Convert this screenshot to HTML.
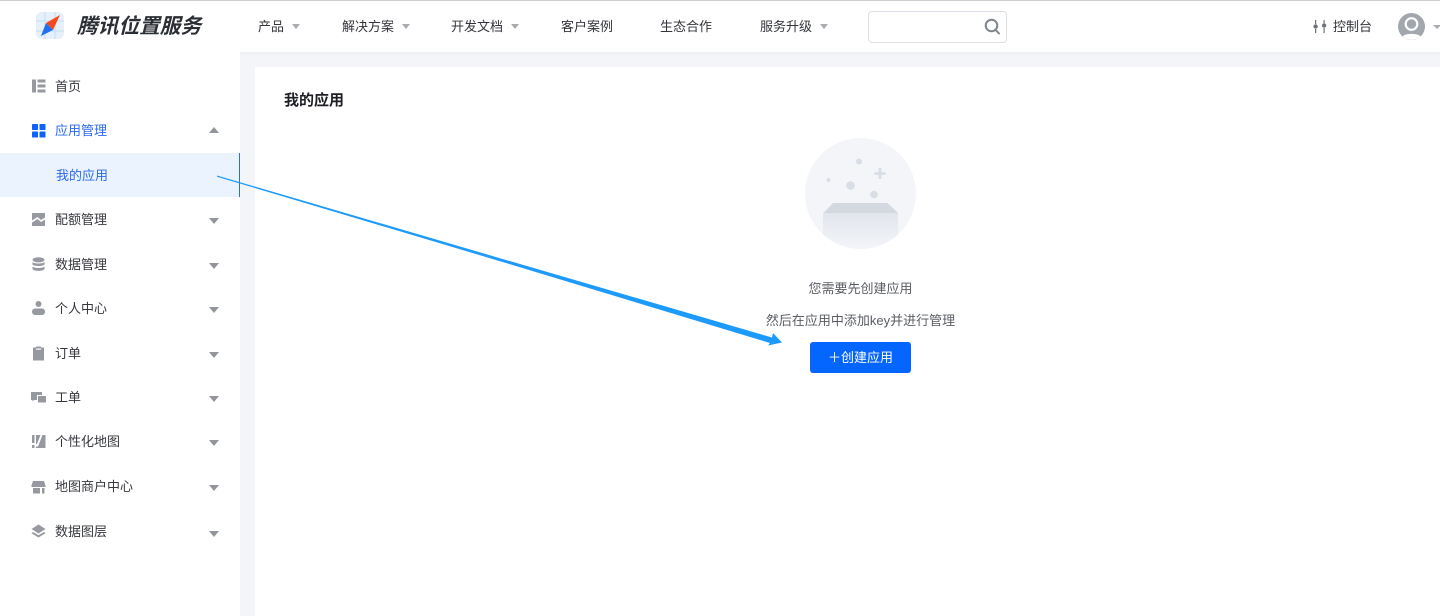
<!DOCTYPE html>
<html lang="zh"><head><meta charset="utf-8"><title>我的应用</title>
<style>
html,body{margin:0;padding:0;width:1440px;height:616px;overflow:hidden;background:#f3f5f9;font-family:"Liberation Sans","Noto Sans CJK SC",sans-serif;font-size:13px;color:#444}
.a{position:absolute;white-space:nowrap}
.nav{top:18px;line-height:18px;color:#33353b}
.tri{position:absolute;width:0;height:0;border-left:4px solid transparent;border-right:4px solid transparent;border-top:5px solid #a9abb0}
.m{left:55px;line-height:18px;color:#36383e}
.st{position:absolute;left:209px;width:0;height:0;border-left:5px solid transparent;border-right:5px solid transparent;border-top:6px solid #92959b}
.ic{position:absolute;left:30px;width:17px;height:17px}
</style></head><body>
<div class="a" style="left:0;top:0;width:1440px;height:52px;background:#fff;border-top:1px solid #ccc;box-sizing:border-box;box-shadow:0 1px 4px rgba(30,40,70,.06)"></div>
<div class="a" style="left:0;top:52px;width:240px;height:564px;background:#fff"></div>
<div class="a" style="left:255px;top:67px;width:1185px;height:549px;background:#fff"></div>

<svg class="a" style="left:36px;top:11px" width="29" height="29" viewBox="0 0 29 29">
<rect x="0" y="1" width="28" height="27" rx="6" fill="#e6f0fb"/>
<path d="M9 1V28M19 1V28M0 10H28M0 20H28" stroke="#cfe3f6" stroke-width="1.5"/>
<path d="M24 4L17 19 10 12Z" fill="#f4481e"/>
<path d="M5 25L10 12 17 19Z" fill="#1f6ff0"/>
</svg>
<div class="a" style="left:77px;top:14px;font-size:20.7px;line-height:26px;font-weight:bold;font-style:italic;color:#2b2e34">腾讯位置服务</div>

<div class="a nav" style="left:258px">产品</div><div class="tri" style="left:292px;top:24px"></div>
<div class="a nav" style="left:342px">解决方案</div><div class="tri" style="left:402px;top:24px"></div>
<div class="a nav" style="left:451px">开发文档</div><div class="tri" style="left:511px;top:24px"></div>
<div class="a nav" style="left:561px">客户案例</div>
<div class="a nav" style="left:660px">生态合作</div>
<div class="a nav" style="left:760px">服务升级</div><div class="tri" style="left:820px;top:24px"></div>
<div class="a" style="left:868px;top:11px;width:139px;height:32px;box-sizing:border-box;border:1px solid #dcdfe6;border-radius:4px;background:#fff"></div>
<svg class="a" style="left:983px;top:17px" width="18" height="18" viewBox="0 0 18 18" fill="none" stroke="#7f858e" stroke-width="2"><circle cx="8.500" cy="8.500" r="5.800"/><path d="M12.800 13L16 16.500" stroke-linecap="round"/></svg>

<svg class="a" style="left:1313px;top:18px" width="15" height="17" viewBox="0 0 15 17" fill="#6e727a"><rect x="2" y="2" width="1.200" height="4"/><rect x="2" y="11" width="1.200" height="4"/><rect x="10.500" y="2" width="1.200" height="3"/><rect x="10.500" y="10" width="1.200" height="5"/><circle cx="2.600" cy="8.500" r="2.200"/><circle cx="11.100" cy="7.500" r="2.200"/></svg>
<div class="a nav" style="left:1333px">控制台</div>
<svg class="a" style="left:1398px;top:13px" width="28" height="28" viewBox="0 0 28 28"><circle cx="13.500" cy="13.500" r="13.500" fill="#a2a6ad"/><circle cx="13.500" cy="11" r="5.800" fill="none" stroke="#fff" stroke-width="2.200"/><path d="M4.500 23.500C7 20 20 20 22.500 23.500A13.500 13.500 0 0 1 4.500 23.500Z" fill="#fff"/></svg>
<div class="tri" style="left:1433px;top:25px;border-left-width:4px;border-right-width:4px;border-top-width:4px"></div>

<div class="a" style="left:0;top:153px;width:240px;height:44px;background:#ebf3fe;box-sizing:border-box;border-right:1px solid #2a6fdc"></div>

<svg class="ic" style="top:78px" viewBox="0 0 17 17" fill="#96999f"><rect x="2" y="1.500" width="4" height="13"/><rect x="7.500" y="1.500" width="8" height="3"/><rect x="7.500" y="6.500" width="8" height="3"/><rect x="7.500" y="11.500" width="8" height="3"/></svg>
<div class="a m" style="top:78px">首页</div>

<svg class="ic" style="top:122px" viewBox="0 0 17 17" fill="#0f62fe"><rect x="2" y="2" width="6" height="6" rx=".8"/><rect x="9.500" y="2" width="6" height="6" rx=".8"/><rect x="2" y="9.500" width="6" height="6" rx=".8"/><rect x="9.500" y="9.500" width="6" height="6" rx=".8"/></svg>
<div class="a m" style="top:122px;color:#2a6af0">应用管理</div>
<div class="st" style="top:127px;border-top:0;border-bottom:6px solid #92959b"></div>

<div class="a m" style="left:56px;top:167px;color:#2a6af0">我的应用</div>

<svg class="ic" style="top:211px" viewBox="0 0 17 17" fill="#96999f"><path d="M2 2H15V6.500L11 9 7.500 6 2 9.500ZM2 11.500L7.500 8 11 11 15 8.500V15H2Z"/></svg>
<div class="a m" style="top:211px">配额管理</div><div class="st" style="top:218px"></div>

<svg class="ic" style="top:256px" viewBox="0 0 17 17" fill="#96999f"><ellipse cx="8.500" cy="3.800" rx="6" ry="2.600"/><path d="M2.500 6C4 8 13 8 14.500 6V8.500C13 10.500 4 10.500 2.500 8.500ZM2.500 10.500C4 12.500 13 12.500 14.500 10.500V13C13 15.500 4 15.500 2.500 13Z"/></svg>
<div class="a m" style="top:256px">数据管理</div><div class="st" style="top:263px"></div>

<svg class="ic" style="top:300px" viewBox="0 0 17 17" fill="#96999f"><circle cx="8.500" cy="4" r="3"/><rect x="2" y="8.500" width="13" height="6.500" rx="3.200"/></svg>
<div class="a m" style="top:300px">个人中心</div><div class="st" style="top:307px"></div>

<svg class="ic" style="top:345px" viewBox="0 0 17 17" fill="#96999f"><path d="M3 2.500H6V1.500H11V2.500H14V15.500H3Z"/><rect x="6" y="3.500" width="5" height="1.200" fill="#fff"/></svg>
<div class="a m" style="top:345px">订单</div><div class="st" style="top:352px"></div>

<svg class="ic" style="top:389px" viewBox="0 0 17 17" fill="#96999f"><path d="M1 3H12V6H7V11H4L2.500 12.500V11H1Z"/><rect x="8" y="7" width="8" height="6.500"/></svg>
<div class="a m" style="top:389px">工单</div><div class="st" style="top:396px"></div>

<svg class="ic" style="top:433px" viewBox="0 0 17 17" fill="#96999f"><rect x="2" y="2" width="2.500" height="8"/><rect x="2" y="12" width="2.500" height="3"/><path d="M6 2H10.500L7 11H6ZM12.500 2H15.500V15H6V13.500H8Z"/></svg>
<div class="a m" style="top:433px">个性化地图</div><div class="st" style="top:440px"></div>

<svg class="ic" style="top:478px" viewBox="0 0 17 17" fill="#96999f"><path d="M3 3H14L15.500 7.500H1.500Z"/><rect x="1.500" y="7" width="14" height="2"/><rect x="3" y="10" width="7" height="5.500"/><rect x="12" y="10" width="2.500" height="5.500"/></svg>
<div class="a m" style="top:478px">地图商户中心</div><div class="st" style="top:485px"></div>

<svg class="ic" style="top:523px" viewBox="0 0 17 17" fill="#96999f"><path d="M8.500 1.500L15.500 6 8.500 10.500 1.500 6Z"/><path d="M3 9L1.500 10.300 8.500 14.500 15.500 10.300 14 9 8.500 12.300Z"/></svg>
<div class="a m" style="top:523px">数据图层</div><div class="st" style="top:531px"></div>

<div class="a" style="left:284px;top:91px;font-size:15px;line-height:19px;font-weight:bold;color:#1d1f24">我的应用</div>

<svg class="a" style="left:805px;top:138px" width="111" height="111" viewBox="0 0 111 111">
<defs><linearGradient id="g" x1="0" y1="0" x2="0" y2="1"><stop offset="0" stop-color="#e2e5ec"/><stop offset="1" stop-color="#f3f5f9"/></linearGradient>
<clipPath id="c"><circle cx="55.500" cy="55.500" r="55.500"/></clipPath></defs>
<circle cx="55.500" cy="55.500" r="55.500" fill="#f3f5f9"/>
<circle cx="54" cy="23.500" r="3" fill="#d9dde5"/><circle cx="23.500" cy="42" r="2" fill="#d9dde5"/><circle cx="45.500" cy="47.500" r="4.300" fill="#d9dde5"/><circle cx="69" cy="56.500" r="3.800" fill="#d9dde5"/>
<path d="M75 30V41M69.500 35.500H80.500" stroke="#d9dde5" stroke-width="2.800"/>
<path d="M18.500 75L28 65H82.500L93 75Z" fill="#d3d8e1"/>
<g clip-path="url(#c)"><rect x="18" y="75" width="75" height="36" fill="url(#g)"/></g>
</svg>

<div class="a" style="left:760px;top:280px;width:201px;text-align:center;line-height:18px;color:#5a5d64">您需要先创建应用</div>
<div class="a" style="left:760px;top:312px;width:201px;text-align:center;line-height:18px;color:#5a5d64">然后在应用中添加key并进行管理</div>
<div class="a" style="left:810px;top:342px;width:101px;height:31px;line-height:31px;background:#0565ff;border-radius:3px;color:#fff;text-align:center">＋创建应用</div>

<svg class="a" style="left:0;top:0;pointer-events:none" width="1440" height="616" viewBox="0 0 1440 616">
<path d="M217 175.500L217 176.700L500 261.200L770 343L768 345.500L782 342.500L773 333L772 337.500L500 258.200Z" fill="#1c9bfc"/>
</svg>
</body></html>
